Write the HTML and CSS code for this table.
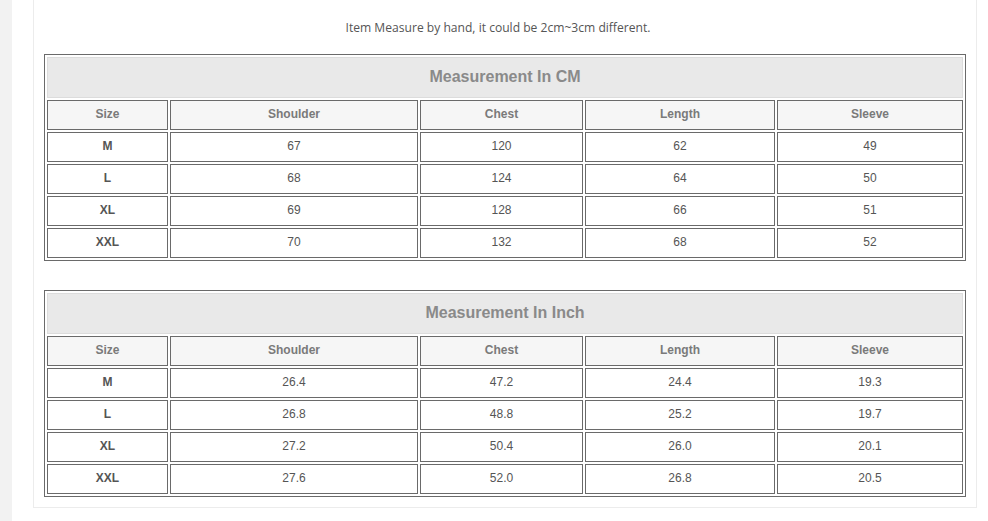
FILE: index.html
```html
<!DOCTYPE html>
<html>
<head>
<meta charset="utf-8">
<link rel="stylesheet" href="styles.css">
</head>
<body>
<div class="page">
  <div class="strip"></div>
  <div class="gutter"></div>
  <div class="panel">
    <p class="note">Item Measure by hand, it could be 2cm~3cm different.</p>
    <table class="size-table">
      <colgroup><col class="c1"><col class="c2"><col class="c3"><col class="c4"><col class="c5"></colgroup>
      <tr><td class="title" colspan="5">Measurement In CM</td></tr>
      <tr class="head"><td>Size</td><td>Shoulder</td><td>Chest</td><td>Length</td><td>Sleeve</td></tr>
      <tr><td class="sz">M</td><td>67</td><td>120</td><td>62</td><td>49</td></tr>
      <tr><td class="sz">L</td><td>68</td><td>124</td><td>64</td><td>50</td></tr>
      <tr><td class="sz">XL</td><td>69</td><td>128</td><td>66</td><td>51</td></tr>
      <tr><td class="sz">XXL</td><td>70</td><td>132</td><td>68</td><td>52</td></tr>
    </table>
    <table class="size-table second">
      <colgroup><col class="c1"><col class="c2"><col class="c3"><col class="c4"><col class="c5"></colgroup>
      <tr><td class="title" colspan="5">Measurement In Inch</td></tr>
      <tr class="head"><td>Size</td><td>Shoulder</td><td>Chest</td><td>Length</td><td>Sleeve</td></tr>
      <tr><td class="sz">M</td><td>26.4</td><td>47.2</td><td>24.4</td><td>19.3</td></tr>
      <tr><td class="sz">L</td><td>26.8</td><td>48.8</td><td>25.2</td><td>19.7</td></tr>
      <tr><td class="sz">XL</td><td>27.2</td><td>50.4</td><td>26.0</td><td>20.1</td></tr>
      <tr><td class="sz">XXL</td><td>27.6</td><td>52.0</td><td>26.8</td><td>20.5</td></tr>
    </table>
  </div>
</div>
</body>
</html>
```
FILE: styles.css
```css
html, body {
  margin: 0;
  padding: 0;
  background: #ffffff;
}
.page {
  display: flex;
  align-items: flex-start;
  min-height: 521px;
}
.strip {
  width: 12px;
  align-self: stretch;
  background: #f2f2f2;
  flex: none;
}
.gutter {
  width: 21px;
  flex: none;
}
.panel {
  width: 922px;
  flex: none;
  border: 1px solid #ececec;
  border-top: none;
  padding: 0 10px 10px 10px;
}
.note {
  margin: 0;
  height: 54px;
  box-sizing: border-box;
  padding: 20px 14px 0 0;
  text-align: center;
  font-family: "Open Sans", sans-serif;
  font-size: 12.1px;
  line-height: 16px;
  color: #555555;
}
.size-table {
  width: 922px;
  table-layout: fixed;
  border-collapse: separate;
  border-spacing: 2px;
  border: 1px solid #6a6a6a;
  font-family: "Liberation Sans", Arial, sans-serif;
  font-size: 12px;
  line-height: 14px;
  color: #555555;
}
.size-table.second {
  margin-top: 29px;
}
.c1 { width: 121px; }
.c2 { width: 248px; }
.c3 { width: 163px; }
.c4 { width: 190px; }
.c5 { width: 186px; }
.size-table td {
  box-sizing: border-box;
  border: 1px solid #6a6a6a;
  height: 30px;
  padding: 0 0 2px 0;
  text-align: center;
  vertical-align: middle;
  background: #ffffff;
}
.size-table td.title {
  height: 41px;
  padding-bottom: 2px;
  background: #e9e9e9;
  border-color: #dcdcdc;
  font-size: 16px;
  line-height: 18px;
  font-weight: bold;
  color: #8a8a8a;
}
.size-table .head td {
  background: #f6f6f6;
  font-weight: bold;
  color: #7a7a7a;
}
.size-table td.sz {
  font-weight: bold;
  color: #555555;
}
```
